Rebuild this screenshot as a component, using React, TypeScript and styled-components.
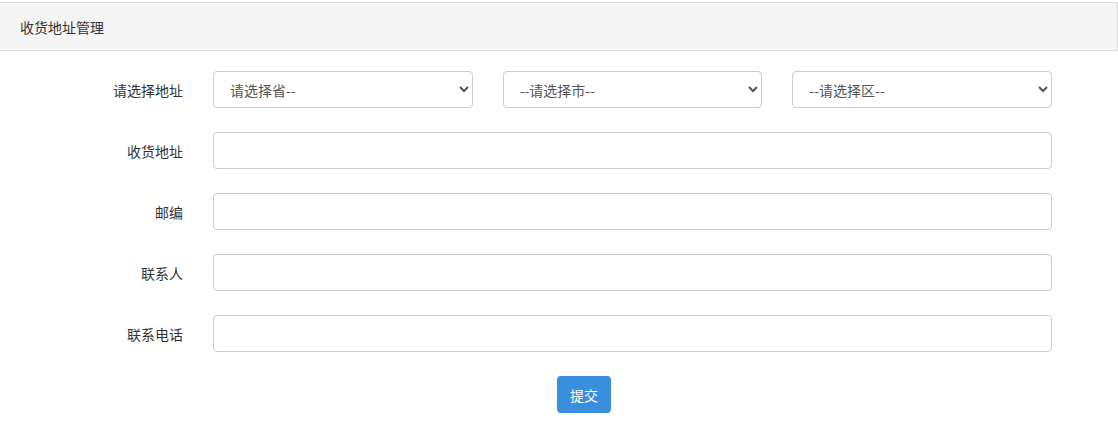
import React from 'react';
import styled, { createGlobalStyle } from 'styled-components';

const GlobalStyle = createGlobalStyle`
  html, body {
    margin: 0;
    padding: 0;
    background: #fff;
    font-family: "Noto Sans CJK SC", "Liberation Sans", sans-serif;
    font-size: 14px;
    color: #333;
  }
`;

const Panel = styled.div`
  padding-top: 2px;
  width: 1118px;
`;

const PanelHeader = styled.div`
  height: 49px;
  box-sizing: border-box;
  width: 1118px;
  background: #f5f5f5;
  border-top: 1px solid #dddddd;
  border-bottom: 1px solid #dddddd;
  border-right: 1px solid #dddddd;
  display: flex;
  align-items: center;
  padding-left: 20px;
  font-size: 14px;
  color: #333;
`;

const Form = styled.form`
  padding-top: 20px;
  display: flex;
  flex-direction: column;
  gap: 24px;
`;

const Row = styled.div`
  display: grid;
  grid-template-columns: 183px 839px;
  column-gap: 30px;
  align-items: center;
`;

const Label = styled.label`
  text-align: right;
  font-size: 14px;
  color: #333;
`;

const SelectGroup = styled.div`
  display: grid;
  grid-template-columns: repeat(3, 1fr);
  column-gap: 30px;
`;

const Select = styled.select`
  height: 37px;
  box-sizing: border-box;
  width: 100%;
  border: 1px solid #ccc;
  border-radius: 4px;
  background-color: #fff;
  padding: 0 10px 0 12px;
  font-family: inherit;
  font-size: 14px;
  color: #555;
`;

const Input = styled.input`
  height: 37px;
  box-sizing: border-box;
  width: 100%;
  border: 1px solid #ccc;
  border-radius: 4px;
  padding: 0 12px;
  font-family: inherit;
  font-size: 14px;
  color: #555;
  outline: none;
`;

const ButtonRow = styled.div`
  display: flex;
  padding-left: 557px;
`;

const SubmitButton = styled.button`
  width: 54px;
  height: 37px;
  border: none;
  border-radius: 4px;
  background: #3a8fdd;
  color: #fff;
  font-family: inherit;
  font-size: 14px;
  cursor: pointer;
`;

const fields = ['收货地址', '邮编', '联系人', '联系电话'];

export default function App() {
  return (
    <>
      <GlobalStyle />
      <Panel>
        <PanelHeader>收货地址管理</PanelHeader>
        <Form onSubmit={(e) => e.preventDefault()}>
          <Row>
            <Label>请选择地址</Label>
            <SelectGroup>
              <Select defaultValue="">
                <option value="">请选择省--</option>
              </Select>
              <Select defaultValue="">
                <option value="">--请选择市--</option>
              </Select>
              <Select defaultValue="">
                <option value="">--请选择区--</option>
              </Select>
            </SelectGroup>
          </Row>
          {fields.map((f) => (
            <Row key={f}>
              <Label>{f}</Label>
              <Input type="text" />
            </Row>
          ))}
          <ButtonRow>
            <SubmitButton type="submit">提交</SubmitButton>
          </ButtonRow>
        </Form>
      </Panel>
    </>
  );
}
